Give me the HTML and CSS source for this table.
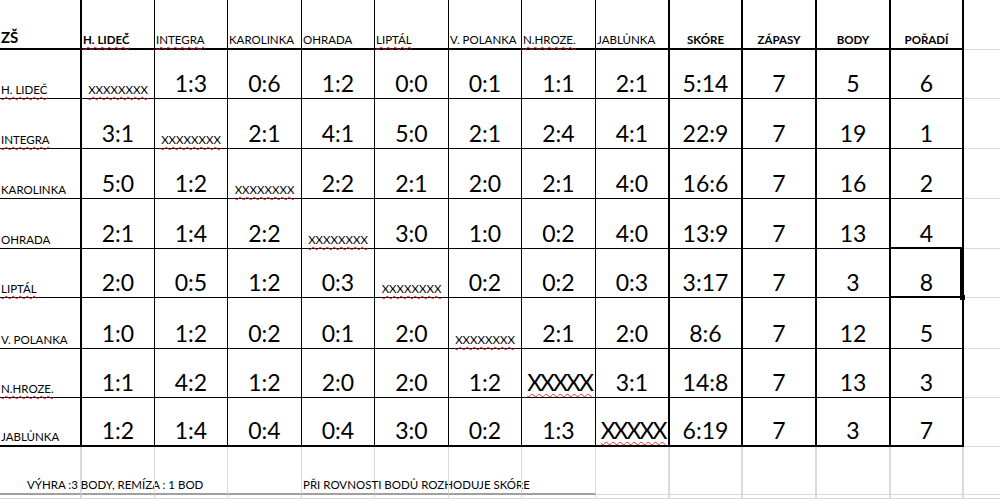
FILE: index.html
```html
<!DOCTYPE html>
<html lang="cs">
<head>
<meta charset="utf-8">
<title>ZŠ – tabulka</title>
<link rel="stylesheet" href="styles.css">
</head>
<body>
<div class="sheet">
  <div class="row head">
    <div class="c corner">ZŠ</div>
    <div class="c hl"><span class="sp">H. LIDEČ</span></div>
    <div class="c hn"><span class="sp">INTEGRA</span></div>
    <div class="c hn">KAROLINKA</div>
    <div class="c hn">OHRADA</div>
    <div class="c hn"><span class="sp">LIPTÁL</span></div>
    <div class="c hn">V. POLANKA</div>
    <div class="c hn"><span class="sp">N.HROZE.</span></div>
    <div class="c hn">JABLŮNKA</div>
    <div class="c hb">SKÓRE</div>
    <div class="c hb">ZÁPASY</div>
    <div class="c hb">BODY</div>
    <div class="c hb">POŘADÍ</div>
    <div class="c x"></div>
  </div>
  <div class="row">
    <div class="c lbl"><span class="sp">H. LIDEČ</span></div>
    <div class="c xs"><span class="sp">XXXXXXXX</span></div>
    <div class="c">1:3</div><div class="c">0:6</div><div class="c">1:2</div><div class="c">0:0</div><div class="c">0:1</div><div class="c">1:1</div><div class="c">2:1</div>
    <div class="c">5:14</div><div class="c">7</div><div class="c">5</div><div class="c">6</div>
    <div class="c x"></div>
  </div>
  <div class="row">
    <div class="c lbl"><span class="sp">INTEGRA</span></div>
    <div class="c">3:1</div>
    <div class="c xs"><span class="sp">XXXXXXXX</span></div>
    <div class="c">2:1</div><div class="c">4:1</div><div class="c">5:0</div><div class="c">2:1</div><div class="c">2:4</div><div class="c">4:1</div>
    <div class="c">22:9</div><div class="c">7</div><div class="c">19</div><div class="c">1</div>
    <div class="c x"></div>
  </div>
  <div class="row">
    <div class="c lbl">KAROLINKA</div>
    <div class="c">5:0</div><div class="c">1:2</div>
    <div class="c xs"><span class="sp">XXXXXXXX</span></div>
    <div class="c">2:2</div><div class="c">2:1</div><div class="c">2:0</div><div class="c">2:1</div><div class="c">4:0</div>
    <div class="c">16:6</div><div class="c">7</div><div class="c">16</div><div class="c">2</div>
    <div class="c x"></div>
  </div>
  <div class="row">
    <div class="c lbl">OHRADA</div>
    <div class="c">2:1</div><div class="c">1:4</div><div class="c">2:2</div>
    <div class="c xs"><span class="sp">XXXXXXXX</span></div>
    <div class="c">3:0</div><div class="c">1:0</div><div class="c">0:2</div><div class="c">4:0</div>
    <div class="c">13:9</div><div class="c">7</div><div class="c">13</div><div class="c">4</div>
    <div class="c x"></div>
  </div>
  <div class="row">
    <div class="c lbl"><span class="sp">LIPTÁL</span></div>
    <div class="c">2:0</div><div class="c">0:5</div><div class="c">1:2</div><div class="c">0:3</div>
    <div class="c xs"><span class="sp">XXXXXXXX</span></div>
    <div class="c">0:2</div><div class="c">0:2</div><div class="c">0:3</div>
    <div class="c">3:17</div><div class="c">7</div><div class="c">3</div><div class="c sel">8</div>
    <div class="c x"></div>
  </div>
  <div class="row">
    <div class="c lbl">V. POLANKA</div>
    <div class="c">1:0</div><div class="c">1:2</div><div class="c">0:2</div><div class="c">0:1</div><div class="c">2:0</div>
    <div class="c xs"><span class="sp">XXXXXXXX</span></div>
    <div class="c">2:1</div><div class="c">2:0</div>
    <div class="c">8:6</div><div class="c">7</div><div class="c">12</div><div class="c">5</div>
    <div class="c x"></div>
  </div>
  <div class="row">
    <div class="c lbl"><span class="sp">N.HROZE.</span></div>
    <div class="c">1:1</div><div class="c">4:2</div><div class="c">1:2</div><div class="c">2:0</div><div class="c">2:0</div><div class="c">1:2</div>
    <div class="c"><span class="sp xl">XXXXX</span></div>
    <div class="c">3:1</div>
    <div class="c">14:8</div><div class="c">7</div><div class="c">13</div><div class="c">3</div>
    <div class="c x"></div>
  </div>
  <div class="row last">
    <div class="c lbl">JABLŮNKA</div>
    <div class="c">1:2</div><div class="c">1:4</div><div class="c">0:4</div><div class="c">0:4</div><div class="c">3:0</div><div class="c">0:2</div><div class="c">1:3</div>
    <div class="c"><span class="sp xl">XXXXX</span></div>
    <div class="c">6:19</div><div class="c">7</div><div class="c">3</div><div class="c">7</div>
    <div class="c x"></div>
  </div>
  <div class="row foot">
    <div class="c note note1">VÝHRA :3 BODY, REMÍZA : 1 BOD</div>
    <div class="c"></div><div class="c"></div><div class="c"></div>
    <div class="c note note2">PŘI ROVNOSTI BODŮ ROZHODUJE SKÓRE</div>
    <div class="c"></div><div class="c"></div><div class="c"></div>
    <div class="c"></div><div class="c"></div><div class="c"></div><div class="c"></div><div class="c"></div><div class="c x"></div>
  </div>
  <div class="row blank">
    <div class="c"></div><div class="c"></div><div class="c"></div><div class="c"></div><div class="c"></div><div class="c"></div><div class="c"></div>
    <div class="c"></div><div class="c"></div><div class="c"></div><div class="c"></div><div class="c"></div><div class="c"></div><div class="c x"></div>
  </div>
</div>
</body>
</html>
```

FILE: styles.css
```css
html, body {
  margin: 0;
  padding: 0;
  background: #fff;
  overflow: hidden;
}

body {
  font-family: "Lato", "Carlito", "Liberation Sans", sans-serif;
  color: #000;
}

.sheet {
  display: grid;
  grid-template-columns: 82px 73px 73px 74px 73px 74px 73px 74px 74px 73px 74px 74px 73px 1fr;
  grid-template-rows: 50px 49px 50px 50px 50px 49px 51px 49px 49px 48px 4px;
  width: 1000px;
  height: 499px;
  overflow: hidden;
}

.row {
  display: contents;
}

.c {
  box-sizing: border-box;
  border-right: 1px solid #000;
  border-bottom: 1px solid #000;
  display: flex;
  align-items: flex-end;
  justify-content: center;
  white-space: nowrap;
  font-size: 23px;
  line-height: 1.2;
  min-width: 0;
}

/* thick verticals */
.row > .c:nth-child(1) {
  border-right-width: 2px;
}
.row > .c:nth-child(n+9):nth-child(-n+13) {
  border-right-width: 2px;
}

/* thick horizontals */
.head > .c,
.last > .c {
  border-bottom-width: 2px;
}

/* extra grid column outside the table */
.row > .c.x {
  border-right: 0;
  border-bottom: 1px solid #dadada;
}

/* labels */
.corner {
  justify-content: flex-start;
  font-size: 15px;
  font-weight: 700;
  padding: 0 0 2.3px 1px;
}

.hl, .hn, .hb, .lbl, .xs, .note {
  font-size: 11.5px;
  padding-bottom: 1.5px;
}

.hl, .hn, .lbl {
  justify-content: flex-start;
  padding-left: 1px;
}

.hl, .hb {
  font-weight: 700;
}

.sp {
  text-decoration: underline wavy #e8262a;
  text-decoration-thickness: 1px;
  text-underline-offset: 2px;
  text-decoration-skip-ink: none;
}

.xl {
  letter-spacing: -2px;
  margin-right: -2px;
}

/* selected cell */
.sel {
  position: relative;
}
.sel::after {
  content: "";
  position: absolute;
  left: -2px;
  top: -2px;
  right: 0;
  bottom: -1px;
  border: 2px solid #000;
  pointer-events: none;
}
.sel::before {
  content: "";
  position: absolute;
  right: -3px;
  bottom: -3px;
  width: 5px;
  height: 5px;
  background: #000;
  z-index: 1;
}

/* footer row with plain gridlines */
.foot > .c,
.blank > .c {
  border-right: 1px solid #dadada;
  border-bottom: 1px solid #dadada;
}
.foot > .c:nth-child(-n+8) {
  border-bottom: 2px solid #a0a0a0;
}
.foot > .c.x,
.blank > .c.x {
  border-right: 0;
}

.note {
  justify-content: flex-start;
  overflow: visible;
}
.note1 {
  padding-left: 27px;
}
.note2 {
  padding-left: 1px;
}
```
